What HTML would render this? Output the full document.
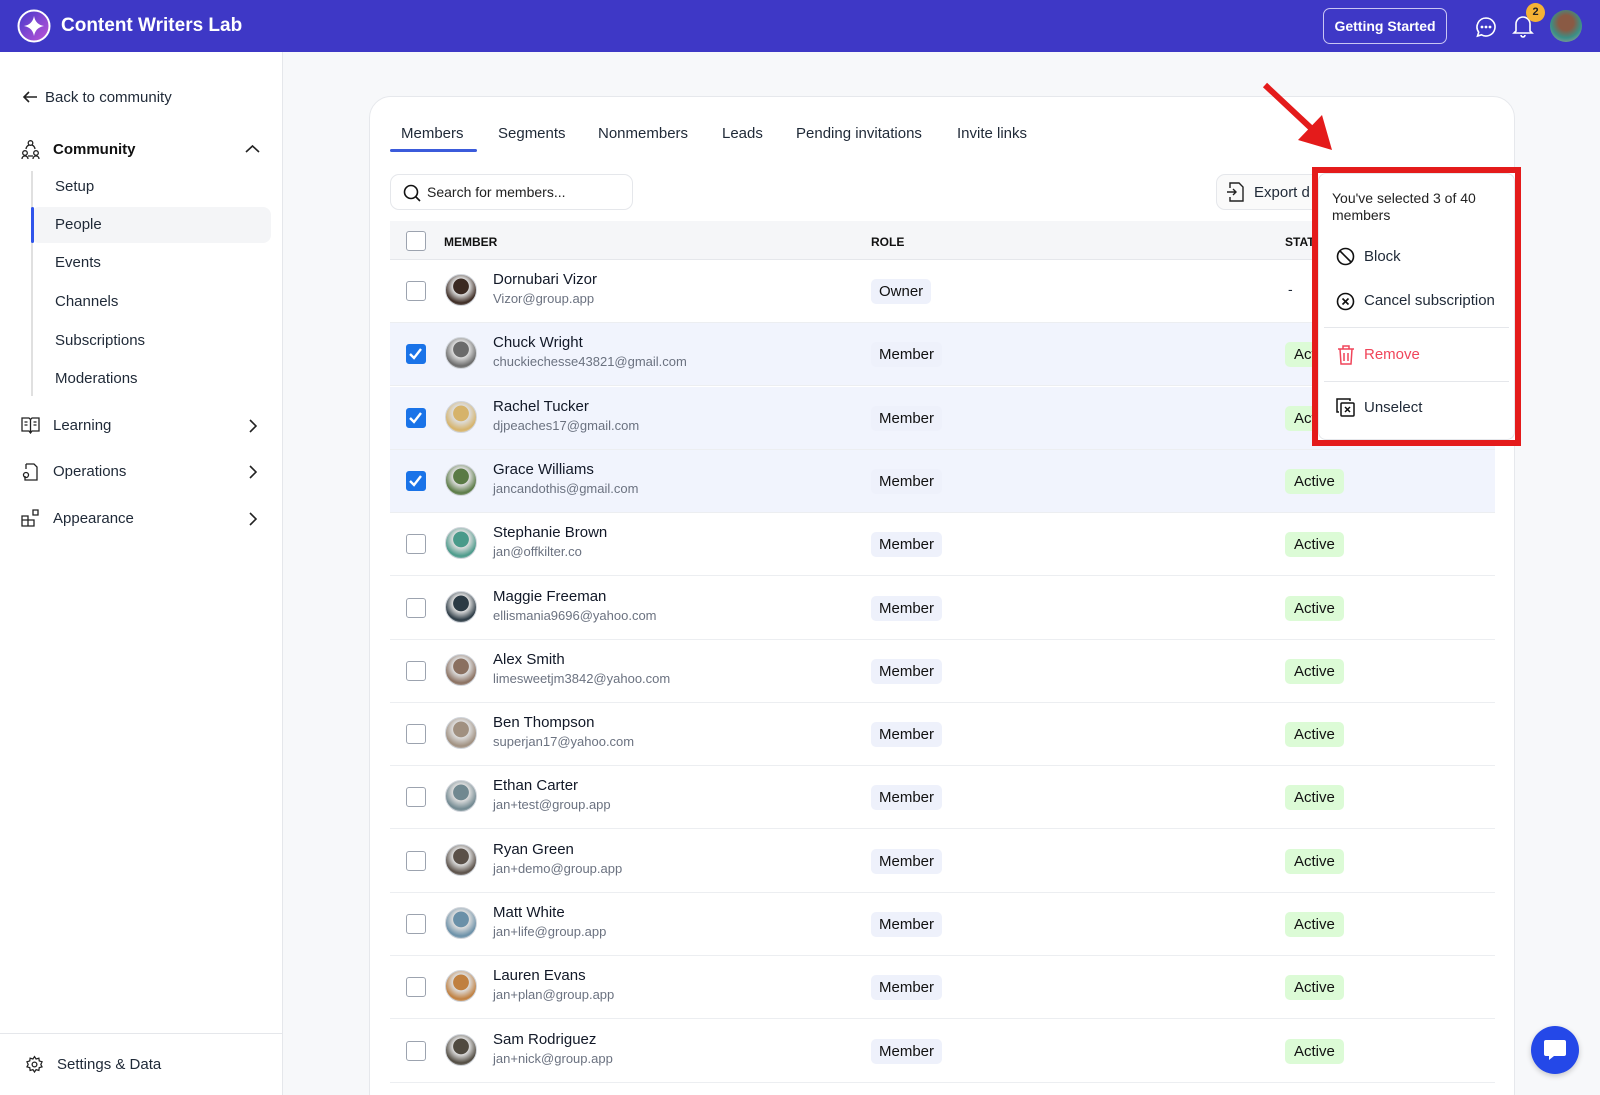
<!DOCTYPE html>
<html><head><meta charset="utf-8"><style>
*{box-sizing:border-box;margin:0;padding:0}
html,body{width:1600px;height:1095px;overflow:hidden}
body{background:#f7f8fa;font-family:"Liberation Sans",sans-serif;color:#1f2937;position:relative}
.abs{position:absolute}
.hdr{left:0;top:0;width:1600px;height:52px;background:#3e38c6}
.side{left:0;top:52px;width:283px;height:1043px;background:#fff;border-right:1px solid #e5e7eb}
.t{position:absolute;white-space:nowrap}
.card{left:369px;top:96px;width:1146px;height:1020px;background:#fff;border:1px solid #e6e8ec;border-radius:22px}
.row{position:absolute;left:390px;width:1105px;height:63px;border-bottom:1px solid #eceef1}
.cb{position:absolute;left:16px;width:20px;height:20px;border:1.5px solid #9ca3af;border-radius:3px;background:#fff}
.cb.on{background:#1a73e8;border-color:#1a73e8}
.av{position:absolute;left:55px;width:32px;height:32px;border-radius:50%;border:1.5px solid #d1d5db}
.nm{position:absolute;left:103px;font-size:15px;color:#111827}
.em{position:absolute;left:103px;font-size:13px;color:#6b7280}
.badge{position:absolute;left:481px;height:25px;padding:0 8px;line-height:25px;font-size:15px;background:#eef1fb;border-radius:5px;color:#111}
.act{position:absolute;left:895px;height:25px;padding:0 9px;line-height:25px;font-size:15px;background:#dcfbd6;border-radius:5px;color:#111}
.si{font-size:15px;color:#1f2937}
</style></head><body>
<div class="abs hdr"></div>
<svg class="abs" style="left:17px;top:9px" width="34" height="34" viewBox="0 0 34 34"><defs><linearGradient id="g" x1="0" y1="0" x2="1" y2="1"><stop offset="0" stop-color="#4338ca"/><stop offset="1" stop-color="#c055d8"/></linearGradient></defs><circle cx="17" cy="17" r="15.5" fill="url(#g)" stroke="#fff" stroke-width="2"/><path d="M17 7 Q18.5 15.5 27 17 Q18.5 18.5 17 27 Q15.5 18.5 7 17 Q15.5 15.5 17 7Z" fill="#fff"/></svg>
<div class="t" style="left:61px;top:15px;font-size:19px;font-weight:bold;color:#fff">Content Writers Lab</div>
<div class="abs" style="left:1323px;top:8px;width:124px;height:36px;border:1px solid #c9c6f3;border-radius:7px;color:#fff;font-size:14px;line-height:34px;text-align:center;font-weight:bold;white-space:nowrap">Getting Started</div>
<svg class="abs" style="left:1475px;top:16px" width="22" height="22" viewBox="0 0 22 22" fill="none" stroke="#fff" stroke-width="1.6"><path d="M11 2a9 9 0 1 1-4.5 16.8L2.5 20l1.2-3.8A9 9 0 0 1 11 2z"/><circle cx="7" cy="11" r=".6" fill="#fff"/><circle cx="11" cy="11" r=".6" fill="#fff"/><circle cx="15" cy="11" r=".6" fill="#fff"/></svg>
<svg class="abs" style="left:1512px;top:14px" width="22" height="24" viewBox="0 0 22 24" fill="none" stroke="#fff" stroke-width="1.6"><path d="M4 17V10a7 7 0 0 1 14 0v7l2 2H2z"/><path d="M9 21a2 2 0 0 0 4 0"/></svg>
<div class="abs" style="left:1526px;top:3px;width:19px;height:19px;border-radius:50%;background:#f5b335;color:#222;font-size:11px;font-weight:bold;text-align:center;line-height:19px">2</div>
<div class="abs" style="left:1550px;top:10px;width:32px;height:32px;border-radius:50%;background:radial-gradient(circle at 50% 40%,#8a5a44 0 30%,#3a8f86 60%,#b9a6a0)"></div>

<div class="abs side"></div>
<svg class="abs" style="left:22px;top:89px" width="16" height="16" viewBox="0 0 16 16" fill="none" stroke="#222" stroke-width="1.6"><path d="M15 8H2M7 3L2 8l5 5"/></svg>
<div class="t si" style="left:45px;top:89px">Back to community</div>
<svg class="abs" style="left:20px;top:139px" width="21" height="21" viewBox="0 0 21 21" fill="none" stroke="#222" stroke-width="1.3"><circle cx="10.5" cy="4" r="2.3"/><circle cx="5" cy="14" r="2.3"/><circle cx="16" cy="14" r="2.3"/><path d="M2 20c0-2 1.5-3 3-3s3 1 3 3M13 20c0-2 1.5-3 3-3s3 1 3 3M6 10a5 5 0 0 1 3-4M15 10a5 5 0 0 0-3-4M8 17h5"/></svg>
<div class="t" style="left:53px;top:141px;font-size:15px;font-weight:bold;color:#111">Community</div>
<svg class="abs" style="left:245px;top:144px" width="15" height="10" viewBox="0 0 15 10" fill="none" stroke="#222" stroke-width="1.6"><path d="M1 8l6.5-6L14 8"/></svg>
<div class="abs" style="left:31px;top:171px;width:2px;height:225px;background:#e0e0e0"></div>
<div class="abs" style="left:31px;top:207px;width:240px;height:36px;background:#f4f5f7;border-radius:8px"></div>
<div class="abs" style="left:31px;top:207px;width:3px;height:36px;background:#2f54eb;border-radius:2px"></div>
<div class="t si" style="left:55px;top:178px">Setup</div>
<div class="t si" style="left:55px;top:216px">People</div>
<div class="t si" style="left:55px;top:254px">Events</div>
<div class="t si" style="left:55px;top:293px">Channels</div>
<div class="t si" style="left:55px;top:332px">Subscriptions</div>
<div class="t si" style="left:55px;top:370px">Moderations</div>
<svg class="abs" style="left:21px;top:417px" width="19" height="17" viewBox="0 0 19 17" fill="none" stroke="#222" stroke-width="1.3"><path d="M1 1h7l1.5 1.5L11 1h7v13h-7l-1.5 2L8 14H1z M9.5 2.5v13M3.5 5h3M3.5 8h3M12.5 5h3M12.5 8h3"/></svg>
<div class="t si" style="left:53px;top:417px">Learning</div>
<svg class="abs" style="left:21px;top:462px" width="18" height="20" viewBox="0 0 18 20" fill="none" stroke="#222" stroke-width="1.3"><path d="M5 2h8l3 3v13H4v-4M5 2v5"/><circle cx="5" cy="13" r="2.5"/></svg>
<div class="t si" style="left:53px;top:463px">Operations</div>
<svg class="abs" style="left:21px;top:509px" width="19" height="18" viewBox="0 0 19 18" fill="none" stroke="#222" stroke-width="1.3"><path d="M1 7h6v10H1zM7 11h6v6H7zM1 11h6M12 1h5v5h-5z"/></svg>
<div class="t si" style="left:53px;top:510px">Appearance</div>
<svg class="abs" style="left:248px;top:419px" width="9" height="14" viewBox="0 0 9 14" fill="none" stroke="#222" stroke-width="1.6"><path d="M2 1l6 6-6 6"/></svg>
<svg class="abs" style="left:248px;top:465px" width="9" height="14" viewBox="0 0 9 14" fill="none" stroke="#222" stroke-width="1.6"><path d="M2 1l6 6-6 6"/></svg>
<svg class="abs" style="left:248px;top:512px" width="9" height="14" viewBox="0 0 9 14" fill="none" stroke="#222" stroke-width="1.6"><path d="M2 1l6 6-6 6"/></svg>
<div class="abs" style="left:0;top:1033px;width:283px;height:1px;background:#e5e7eb"></div>
<svg class="abs" style="left:25px;top:1055px" width="19" height="19" viewBox="0 0 24 24" fill="none" stroke="#222" stroke-width="1.6"><circle cx="12" cy="12" r="3"/><path d="M12 2l2 3 3.5-1 .5 3.5 3.5 1-1.5 3.5 1.5 3-3.5 1-.5 3.5-3.5-1-2 3-2-3-3.5 1-.5-3.5-3.5-1L4 12 2.5 8.5 6 7.5 6.5 4 10 5z"/></svg>
<div class="t si" style="left:57px;top:1056px">Settings &amp; Data</div>

<div class="abs card"></div>
<div class="t si" style="left:401px;top:125px">Members</div>
<div class="t si" style="left:498px;top:125px">Segments</div>
<div class="t si" style="left:598px;top:125px">Nonmembers</div>
<div class="t si" style="left:722px;top:125px">Leads</div>
<div class="t si" style="left:796px;top:125px">Pending invitations</div>
<div class="t si" style="left:957px;top:125px">Invite links</div>
<div class="abs" style="left:390px;top:149px;width:87px;height:3px;background:#3b5bdb;border-radius:2px"></div>
<div class="abs" style="left:390px;top:174px;width:243px;height:36px;border:1px solid #e5e7eb;border-radius:9px"></div>
<svg class="abs" style="left:403px;top:184px" width="18" height="18" viewBox="0 0 18 18" fill="none" stroke="#111" stroke-width="1.6"><circle cx="8" cy="8" r="6.5"/><path d="M13 13l4 4"/></svg>
<div class="t" style="left:427px;top:184px;font-size:14px;color:#222">Search for members...</div>
<div class="abs" style="left:1216px;top:174px;width:120px;height:36px;border:1px solid #e5e7eb;border-radius:9px;background:#fafafa"></div>
<svg class="abs" style="left:1226px;top:182px" width="18" height="20" viewBox="0 0 18 20" fill="none" stroke="#222" stroke-width="1.4"><path d="M4 6V1h9l4 4v14H4v-4M1 10h9M7 7l3 3-3 3"/></svg>
<div class="t si" style="left:1254px;top:184px">Export d</div>

<div class="abs" style="left:390px;top:221px;width:1105px;height:39px;background:#f5f6f8;border-bottom:1px solid #e5e7eb"></div>
<div class="cb" style="left:406px;top:231px"></div>
<div class="t" style="left:444px;top:235px;font-size:12px;font-weight:bold;color:#111">MEMBER</div>
<div class="t" style="left:871px;top:235px;font-size:12px;font-weight:bold;color:#111">ROLE</div>
<div class="t" style="left:1285px;top:235px;font-size:12px;font-weight:bold;color:#111">STATUS</div>

<div id="rows"></div>
<script>
var d=[["Dornubari Vizor","Vizor@group.app",0,"Owner","#3b2a22"],["Chuck Wright","chuckiechesse43821@gmail.com",1,"Member","#6b6b6b"],["Rachel Tucker","djpeaches17@gmail.com",1,"Member","#d6b36a"],["Grace Williams","jancandothis@gmail.com",1,"Member","#5a7a45"],["Stephanie Brown","jan@offkilter.co",0,"Member","#4a9a8a"],["Maggie Freeman","ellismania9696@yahoo.com",0,"Member","#2b3a44"],["Alex Smith","limesweetjm3842@yahoo.com",0,"Member","#8a7060"],["Ben Thompson","superjan17@yahoo.com",0,"Member","#a09080"],["Ethan Carter","jan+test@group.app",0,"Member","#708890"],["Ryan Green","jan+demo@group.app",0,"Member","#5a5048"],["Matt White","jan+life@group.app",0,"Member","#6a90a8"],["Lauren Evans","jan+plan@group.app",0,"Member","#c08040"],["Sam Rodriguez","jan+nick@group.app",0,"Member","#504a40"],["","",0,"","#fff"]];
var h="";
for(var i=0;i<d.length;i++){var r=d[i],yy=Math.round(260+i*63.3);
h+='<div class="row" style="top:'+yy+'px;'+(r[2]===1?'background:#f1f4fd;':'')+'">';
if(r[0]){
h+='<div class="cb'+(r[2]===1?' on':'')+'" style="top:21px">'+(r[2]===1?'<svg width="17" height="17" viewBox="0 0 17 17" style="display:block"><path d="M3 9l4 4 7-9" fill="none" stroke="#fff" stroke-width="2.4"/></svg>':'')+'</div>';
h+='<div class="av" style="top:14px;background:radial-gradient(circle at 50% 38%,'+r[4]+' 0 32%,#ddd 34%,'+r[4]+' 70%,#eee)"></div>';
h+='<div class="nm" style="top:11px">'+r[0]+'</div><div class="em" style="top:31px">'+r[1]+'</div>';
h+='<div class="badge" style="top:19px">'+r[3]+'</div>';
h+=i==0?'<div class="t" style="left:898px;top:21px;font-size:14px">-</div>':'<div class="act" style="top:19px">Active</div>';}
h+='</div>';}
document.getElementById("rows").innerHTML=h;
</script>

<svg class="abs" style="left:1255px;top:80px" width="90" height="80" viewBox="0 0 90 80"><path d="M10 5L58 50" stroke="#e41b1b" stroke-width="6"/><path d="M43 60L77 70L67 35Z" fill="#e41b1b"/></svg>
<div class="abs" style="left:1312px;top:167px;width:209px;height:279px;border:6px solid #e41b1b;background:#fff"></div>
<div class="abs" style="left:1318px;top:173px;width:197px;height:267px;background:#fff;border:1px solid #e5e7eb;border-radius:8px"></div>
<div class="t" style="left:1332px;top:190px;font-size:14px;color:#222;line-height:17px">You've selected 3 of 40<br>members</div>
<svg class="abs" style="left:1336px;top:247px" width="19" height="19" viewBox="0 0 19 19" fill="none" stroke="#111" stroke-width="1.6"><circle cx="9.5" cy="9.5" r="8"/><path d="M4 4l11 11"/></svg>
<div class="t si" style="left:1364px;top:248px">Block</div>
<svg class="abs" style="left:1336px;top:292px" width="19" height="19" viewBox="0 0 19 19" fill="none" stroke="#111" stroke-width="1.6"><circle cx="9.5" cy="9.5" r="8"/><path d="M6.5 6.5l6 6M12.5 6.5l-6 6"/></svg>
<div class="t si" style="left:1364px;top:292px">Cancel subscription</div>
<div class="abs" style="left:1324px;top:327px;width:185px;height:1px;background:#e5e7eb"></div>
<svg class="abs" style="left:1337px;top:345px" width="18" height="20" viewBox="0 0 18 20" fill="none" stroke="#f0455a" stroke-width="1.5"><path d="M1 4h16M6 4V1h6v3M3 4l1 15h10l1-15M7 8v8M11 8v8"/></svg>
<div class="t" style="left:1364px;top:346px;font-size:15px;color:#f0455a">Remove</div>
<div class="abs" style="left:1324px;top:381px;width:185px;height:1px;background:#e5e7eb"></div>
<svg class="abs" style="left:1336px;top:398px" width="20" height="20" viewBox="0 0 20 20" fill="none" stroke="#111" stroke-width="1.5"><path d="M3 14H1V1h13v2"/><rect x="5" y="5" width="13" height="13" rx="1"/><path d="M9 9l5 5M14 9l-5 5"/></svg>
<div class="t si" style="left:1364px;top:399px">Unselect</div>

<div class="abs" style="left:1531px;top:1026px;width:48px;height:48px;border-radius:50%;background:#2448e8;box-shadow:0 2px 6px rgba(0,0,0,.2)"></div>
<svg class="abs" style="left:1543px;top:1038px" width="24" height="24" viewBox="0 0 24 24"><path d="M3 2h18a2 2 0 0 1 2 2v12a2 2 0 0 1-2 2H11l-5 4v-4H3a2 2 0 0 1-2-2V4a2 2 0 0 1 2-2z" fill="#fff"/></svg>
</body></html>
